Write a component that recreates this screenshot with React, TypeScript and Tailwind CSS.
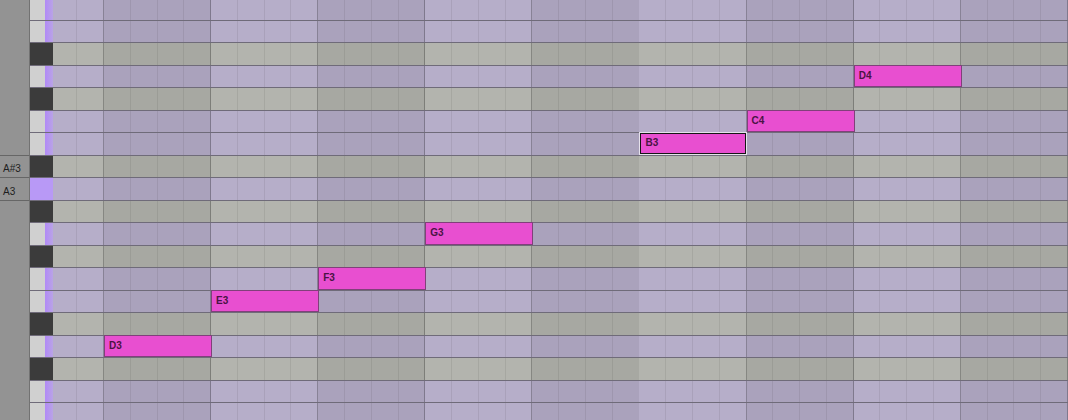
import React from "react";

type Row = {
  name: string;
  black: boolean;
  label?: boolean;
  active?: boolean;
  note?: { bar: number; selected?: boolean };
};

// top to bottom, F4 down to B2
const rows: Row[] = [
  { name: "F4", black: false },
  { name: "E4", black: false },
  { name: "D#4", black: true },
  { name: "D4", black: false, note: { bar: 8 } },
  { name: "C#4", black: true },
  { name: "C4", black: false, note: { bar: 7 } },
  { name: "B3", black: false, note: { bar: 6, selected: true } },
  { name: "A#3", black: true, label: true },
  { name: "A3", black: false, label: true, active: true },
  { name: "G#3", black: true },
  { name: "G3", black: false, note: { bar: 4 } },
  { name: "F#3", black: true },
  { name: "F3", black: false, note: { bar: 3 } },
  { name: "E3", black: false, note: { bar: 2 } },
  { name: "D#3", black: true },
  { name: "D3", black: false, note: { bar: 1 } },
  { name: "C#3", black: true },
  { name: "C3", black: false },
  { name: "B2", black: false },
];

const BARS = [1, 2, 3, 4, 5, 6, 7, 8, 9];

function cellBg(row: Row, dark: boolean) {
  if (row.black) return dark ? "bg-[#a7a8a2]" : "bg-[#b3b4ae]";
  return dark ? "bg-[#aaa2bc]" : "bg-[#b6aec9]";
}

function Note({ name, selected }: { name: string; selected?: boolean }) {
  return (
    <div
      className={
        "absolute z-10 flex items-center pl-[4px] bg-[#e84fd0] border text-[10px] font-bold leading-none text-[#4a1444] " +
        (selected
          ? "top-0 bottom-[1px] left-[1px] right-[1px] border-[#161616] ring-1 ring-[#e6e2ec]"
          : "-top-px bottom-0 left-0 -right-px border-[#80407a]")
      }
    >
      {name}
    </div>
  );
}

function Key({ row }: { row: Row }) {
  if (row.black) return <div className="w-[23px] shrink-0 bg-[#3b3b3b]" />;
  if (row.active) return <div className="w-[23px] shrink-0 bg-[#b899f6]" />;
  return (
    <div className="w-[23px] shrink-0 flex">
      <div className="w-[15px] bg-[#d0d0d0]" />
      <div className="flex-1 bg-gradient-to-r from-[#b189f6] to-[#b9a3e6]" />
    </div>
  );
}

function GridRow({ row }: { row: Row }) {
  return (
    <div className="flex-1 flex">
      {/* partial bar before the first bar line */}
      <div className={"w-[51px] shrink-0 flex " + cellBg(row, false)}>
        <div className="w-[24px] border-r border-black/[0.07]" />
        <div className="flex-1 border-r border-black/25" />
      </div>
      {BARS.map((b) => (
        <div key={b} className={"relative w-[107.1px] shrink-0 flex " + cellBg(row, b % 2 === 1)}>
          <div className="flex-1 border-r border-black/[0.07]" />
          <div className="flex-1 border-r border-black/[0.07]" />
          <div className="flex-1 border-r border-black/[0.07]" />
          <div className="flex-1 border-r border-black/25" />
          {row.note && row.note.bar === b && <Note name={row.name} selected={row.note.selected} />}
        </div>
      ))}
    </div>
  );
}

export default function App() {
  return (
    <div className="w-[1068px] h-[420px] overflow-hidden bg-[#939393] font-['Liberation_Sans',Arial,sans-serif]">
      <div className="-mt-[3px] flex flex-col">
        {rows.map((row, i) => (
          <div key={row.name} className="h-[22.5px] shrink-0 flex">
            <div
              className={
                "w-[30px] shrink-0 bg-[#939393] border-r border-[#727272] flex items-end pl-[3px] pb-[3px] text-[10px] leading-none text-[#1e1e1e] " +
                (row.label || (i > 0 && rows[i - 1].label) ? "border-t border-t-[#666666]" : "")
              }
            >
              {row.label ? row.name : null}
            </div>
            <div className="flex-1 flex border-t border-[#6f6b79]">
              <Key row={row} />
              <GridRow row={row} />
            </div>
          </div>
        ))}
      </div>
    </div>
  );
}
